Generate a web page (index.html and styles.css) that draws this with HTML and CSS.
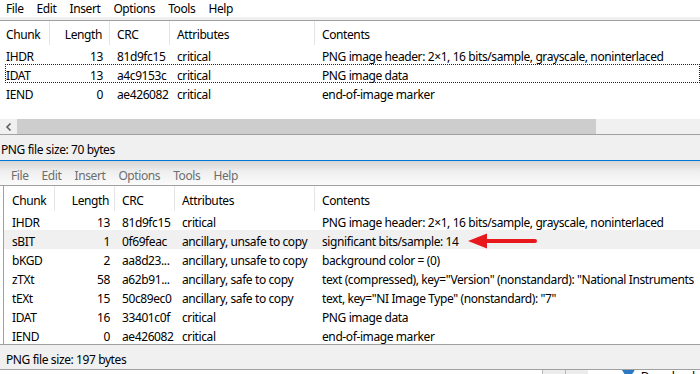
FILE: index.html
```html
<!DOCTYPE html>
<html lang="en">
<head>
  <meta charset="UTF-8" />
  <title>TweakPNG</title>
  <link rel="stylesheet" href="styles.css">
</head>
<body>
  <!-- first window: the original file -->
  <div class="win win-top">
    <div class="menubar">
      <span>File</span><span>Edit</span><span>Insert</span><span>Options</span><span>Tools</span><span>Help</span>
    </div>
    <div class="list">
      <div class="row head">
        <div class="c-chunk">Chunk</div><div class="c-len">Length</div><div>CRC</div><div>Attributes</div><div class="c-text">Contents</div>
      </div>
      <div class="row">
        <div class="c-chunk">IHDR</div><div class="c-len">13</div><div>81d9fc15</div><div>critical</div><div class="c-text">PNG image header: 2×1, 16 bits/sample, grayscale, noninterlaced</div>
      </div>
      <div class="row focus">
        <div class="c-chunk">IDAT</div><div class="c-len">13</div><div>a4c9153c</div><div>critical</div><div class="c-text">PNG image data</div>
      </div>
      <div class="row">
        <div class="c-chunk">IEND</div><div class="c-len">0</div><div>ae426082</div><div>critical</div><div class="c-text">end-of-image marker</div>
      </div>
    </div>
    <div class="hscroll">
      <div class="scroll-btn">
        <svg width="8" height="8" viewBox="0 0 8 8"><path d="M5.5 0.5 L2 4 L5.5 7.5" fill="none" stroke="#606060" stroke-width="1.6"/></svg>
      </div>
      <div class="thumb"></div>
    </div>
    <div class="status">PNG file size: 70 bytes</div>
  </div>

  <!-- second window: after the edit -->
  <div class="win win-bottom">
    <div class="menubar">
      <span>File</span><span>Edit</span><span>Insert</span><span>Options</span><span>Tools</span><span>Help</span>
    </div>
    <div class="list">
      <div class="row head">
        <div class="c-chunk">Chunk</div><div class="c-len">Length</div><div>CRC</div><div>Attributes</div><div class="c-text">Contents</div>
      </div>
      <div class="row">
        <div class="c-chunk">IHDR</div><div class="c-len">13</div><div>81d9fc15</div><div>critical</div><div class="c-text">PNG image header: 2×1, 16 bits/sample, grayscale, noninterlaced</div>
      </div>
      <div class="row selected">
        <div class="c-chunk">sBIT</div><div class="c-len">1</div><div>0f69feac</div><div>ancillary, unsafe to copy</div><div class="c-text">significant bits/sample: 14</div>
      </div>
      <div class="row">
        <div class="c-chunk">bKGD</div><div class="c-len">2</div><div>aa8d23...</div><div>ancillary, unsafe to copy</div><div class="c-text">background color = (0)</div>
      </div>
      <div class="row">
        <div class="c-chunk">zTXt</div><div class="c-len">58</div><div>a62b91...</div><div>ancillary, safe to copy</div><div class="c-text">text (compressed), key="Version" (nonstandard): "National Instruments</div>
      </div>
      <div class="row">
        <div class="c-chunk">tEXt</div><div class="c-len">15</div><div>50c89ec0</div><div>ancillary, safe to copy</div><div class="c-text">text, key="NI Image Type" (nonstandard): "7"</div>
      </div>
      <div class="row">
        <div class="c-chunk">IDAT</div><div class="c-len">16</div><div>33401c0f</div><div>critical</div><div class="c-text">PNG image data</div>
      </div>
      <div class="row">
        <div class="c-chunk">IEND</div><div class="c-len">0</div><div>ae426082</div><div>critical</div><div class="c-text">end-of-image marker</div>
      </div>

      <!-- red annotation arrow -->
      <svg class="callout" width="72" height="18" viewBox="0 0 72 18">
        <path d="M0 8 L19 0.5 L19 15.5 Z" fill="#e8171b"/>
        <path d="M18 8 L67 8" stroke="#e8171b" stroke-width="4" stroke-linecap="round"/>
      </svg>
    </div>
    <div class="status">PNG file size: 197 bytes</div>
  </div>

  <!-- what peeks out below -->
  <div class="desk">
    <div class="desk-cell"></div>
    <div class="desk-cell"></div>
    <div class="desk-icon"></div>
    <span class="desk-label">Downloads</span>
  </div>
</body>
</html>
```

FILE: styles.css
```css
body {
  margin: 0;
  width: 700px;
  height: 374px;
  overflow: hidden;
  background: #fff;
  color: #000;
  font-family: "Noto Sans", "Open Sans", sans-serif;
  font-size: 12px;
  letter-spacing: -0.4px;
}

.menubar {
  display: flex;
  gap: 13px;
  white-space: nowrap;
}

/* list view rows */
.list {
  position: relative;
  background: #fff;
  overflow: hidden;
}
.row {
  display: grid;
  height: 19px;
  align-items: center;
  white-space: nowrap;
}
.row > div {
  padding: 3px 7px 0;
  overflow: hidden;
}
.row .c-len {
  text-align: right;
}
.row .c-text {
  overflow: visible;
}
.row.head {
  align-items: stretch;
}
.row.head > div {
  display: flex;
  align-items: center;
  border-right: 1px solid #e5e5e5;
}
.row.head > .c-len {
  justify-content: flex-end;
}
.row.head > .c-text {
  border-right: none;
}

.status {
  background: #f0f0f0;
  border-top: 1px solid #a0a0a0;
  white-space: nowrap;
  box-sizing: border-box;
}

/* --- top window --- */
.win-top .menubar {
  height: 17px;
  align-items: center;
  padding-left: 6px;
  border-bottom: 3px solid #f0f0f0;
}
.win-top .list {
  height: 98px;
  border-top: 1px solid #a0a0a0;
}
.win-top .row {
  grid-template-columns: 50px 60px 60px 145px 1fr;
}
.win-top .row.head {
  height: 24px;
}
.win-top .row .c-chunk {
  padding-left: 6px;
}
.win-top .row.focus {
  grid-template-columns: 45px 60px 60px 145px 1fr;
  outline: 1px dotted #222;
  outline-offset: -1px;
  margin-left: 5px;
}
.win-top .row.focus .c-chunk {
  padding-left: 1px;
}

.hscroll {
  display: flex;
  height: 15px;
  background: #f0f0f0;
}
.scroll-btn {
  width: 17px;
  display: flex;
  align-items: center;
  justify-content: center;
}
.thumb {
  width: 579px;
  background: #cdcdcd;
}
.win-top .status {
  height: 27px;
  padding: 5px 0 0 1px;
  line-height: 20px;
  border-bottom: 1px solid #0078d7;
}

/* --- bottom window (inactive) --- */
.win-bottom .menubar {
  height: 25px;
  align-items: center;
  padding: 5px 0 0 11px;
  box-sizing: border-box;
  color: #6d6d6d;
  background: linear-gradient(#d6d6d6, #efefef 45%, #fbfbfb);
  border-bottom: 1px solid #a0a0a0;
}
.win-bottom .list {
  margin-left: 3px;
  border-left: 1px solid #a0a0a0;
  height: 158px;
}
.win-bottom .row {
  grid-template-columns: 51px 60px 60px 140px 1fr;
}
.win-bottom .row.head {
  height: 25px;
}
.win-bottom .row .c-chunk {
  padding-left: 8px;
}
.win-bottom .row .c-len {
  padding-right: 5px;
}
.win-bottom .row.selected {
  background: #f0f0f0;
}
.win-bottom .status {
  height: 25px;
  padding: 5px 0 0 6px;
  line-height: 20px;
}

.callout {
  position: absolute;
  left: 464px;
  top: 47px;
}

/* strip of the desktop under the windows */
.desk {
  display: flex;
  height: 4px;
  overflow: hidden;
  border-top: 1px solid #a0a0a0;
  background: #fff;
}
.desk-cell {
  width: 24px;
  border-left: 1px solid #b8b8b8;
  background: #ececec;
}
.desk-cell:first-child {
  margin-left: 542px;
}
.desk-icon {
  width: 14px;
  height: 4px;
  margin-left: 34px;
  background: #2b78c5;
  clip-path: polygon(0 0, 100% 0, 80% 100%, 20% 100%);
}
.desk-label {
  margin-left: 6px;
  margin-top: 1px;
  line-height: 12px;
  font-size: 12px;
}
```
